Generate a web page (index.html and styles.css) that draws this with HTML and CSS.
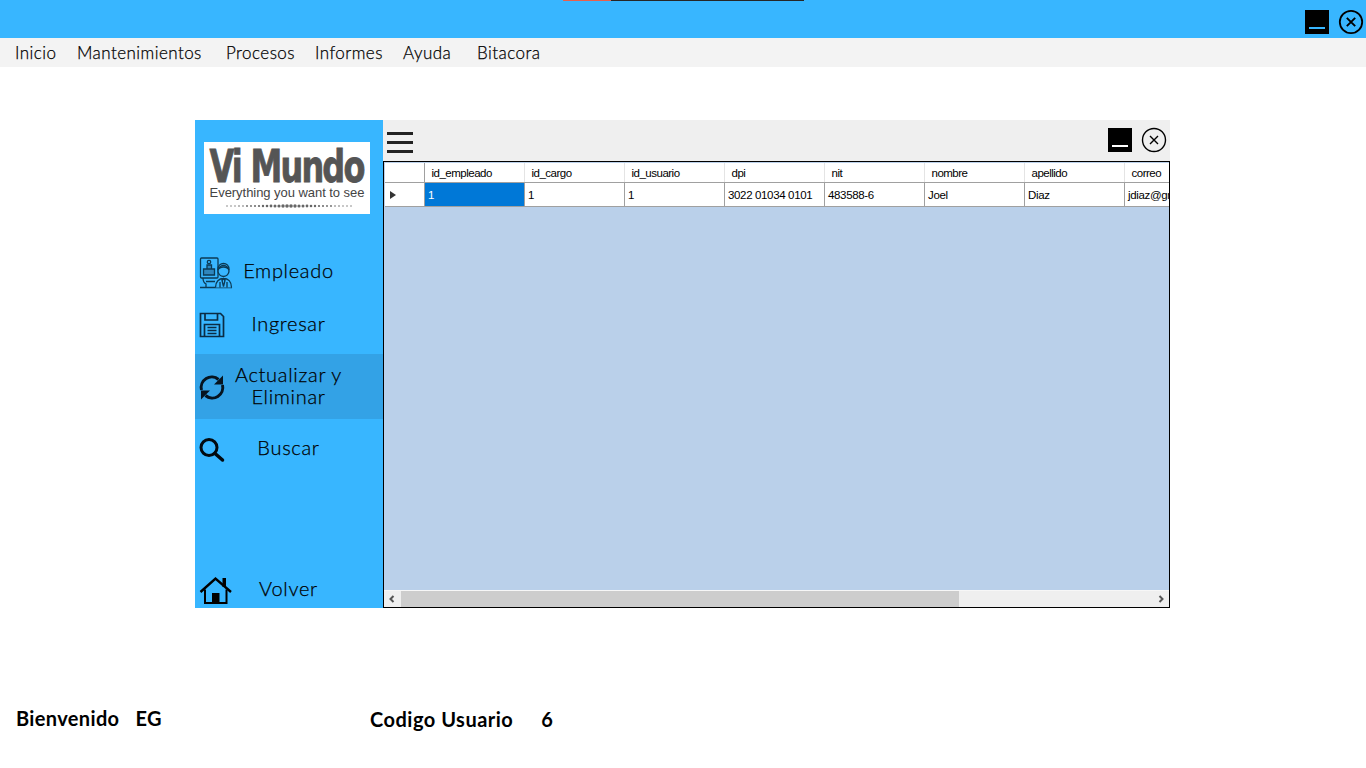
FILE: index.html
```html
<!DOCTYPE html>
<html lang="es">
<head>
  <meta charset="UTF-8">
  <meta name="viewport" content="width=device-width, initial-scale=1.0">
  <link rel="stylesheet" href="styles.css">
  <title>Vi Mundo</title>
</head>
<body>
  <div class="app">
    <header class="titlebar">
      <div class="taskmark"><span class="taskmark-red"></span><span class="taskmark-dark"></span></div>
      <div class="winbtns">
        <span class="btn-min"></span>
        <svg class="btn-close" width="26" height="26" viewBox="0 0 26 26"><circle cx="13" cy="13" r="11.2" fill="none" stroke="#000" stroke-width="1.8"/><path d="M8.800 8.800l8.400 8.400M17.200 8.800l-8.400 8.400" stroke="#000" stroke-width="1.900"/></svg>
      </div>
    </header>

    <nav class="menubar">
      <a>Inicio</a>
      <a>Mantenimientos</a>
      <a>Procesos</a>
      <a>Informes</a>
      <a>Ayuda</a>
      <a>Bitacora</a>
    </nav>

    <main class="panel">
      <aside class="sidebar">
        <div class="logo">
          <div class="logo-title">Vi Mundo</div>
          <div class="logo-sub">Everything you want to see</div>
          <svg class="logo-dots" width="130" height="4" viewBox="0 0 130 4" fill="#666">
            <circle cx="2" cy="2" r=".7"/><circle cx="6" cy="2" r=".7"/><circle cx="10" cy="2" r=".7"/><circle cx="14" cy="2" r=".8"/><circle cx="18" cy="2" r=".8"/><circle cx="22" cy="2" r=".9"/><circle cx="26" cy="2" r=".9"/><circle cx="30" cy="2" r="1"/><circle cx="34" cy="2" r="1.100"/><circle cx="38" cy="2" r="1.200"/><circle cx="42" cy="2" r="1.300"/><circle cx="46" cy="2" r="1.400"/><circle cx="50" cy="2" r="1.500"/><circle cx="54" cy="2" r="1.600"/><circle cx="58" cy="2" r="1.700"/><circle cx="62" cy="2" r="1.800"/><circle cx="66" cy="2" r="1.800"/><circle cx="70" cy="2" r="1.700"/><circle cx="74" cy="2" r="1.600"/><circle cx="78" cy="2" r="1.500"/><circle cx="82" cy="2" r="1.400"/><circle cx="86" cy="2" r="1.300"/><circle cx="90" cy="2" r="1.200"/><circle cx="94" cy="2" r="1.100"/><circle cx="98" cy="2" r="1"/><circle cx="102" cy="2" r=".9"/><circle cx="106" cy="2" r=".9"/><circle cx="110" cy="2" r=".8"/><circle cx="114" cy="2" r=".8"/><circle cx="118" cy="2" r=".7"/><circle cx="122" cy="2" r=".7"/><circle cx="126" cy="2" r=".7"/>
          </svg>
        </div>

        <ul class="sidemenu">
          <li class="item item-empleado">
            <svg width="34" height="34" viewBox="0 0 34 34" fill="none" stroke="#0b3a55" stroke-width="1.300">
              <rect x="1.500" y="3" width="17.500" height="20" rx="1"/>
              <circle cx="10" cy="7" r="1.700"/>
              <path d="M8 14v-4h4.500v4M4.500 14h11v6h-11z" fill="#2f86bd"/>
              <path d="M4 23c0 3 1 5 3 6v3M7 26.500h9M1 32.500h32"/>
              <circle cx="24.500" cy="16" r="5.500" fill="#38b6ff"/>
              <path d="M19 15c-.5-5 3-6.500 5.500-6.500s6 1.500 5.500 6.500c-1-2.500-3-3-5.500-3s-4.500.5-5.500 3z"/>
              <path d="M16.500 32.500c0-6 3.500-9 8-9s8 3 8 9M24.500 23.500l-1.500 2 1.500 6 1.500-6z" fill="#38b6ff"/>
              <path d="M21 27v5.500M28 27v5.500"/>
            </svg>
            <span>Empleado</span>
          </li>
          <li class="item item-ingresar">
            <svg width="34" height="34" viewBox="0 0 34 34" fill="none" stroke="#0b2c44" stroke-width="1.700">
              <path d="M1.500 6.500h20l3 3v20H1.500z"/>
              <path d="M6 6.500v6.500h12.500V6.500M5.500 29.500V17.500h15v12M8.500 20.500h9M8.500 23.500h9M8.500 26.500h9"/>
            </svg>
            <span>Ingresar</span>
          </li>
          <li class="item item-actualizar">
            <svg width="34" height="34" viewBox="0 0 34 34" fill="none" stroke="#06141f" stroke-width="3">
              <path d="M2.500 20a10.500 10.500 0 0 1 17-10.500"/>
              <path d="M23.500 15a10.500 10.500 0 0 1-17 10.500"/>
              <path d="M24 5.500v9h-9z" fill="#06141f" stroke="none"/>
              <path d="M2 29.500v-9h9z" fill="#06141f" stroke="none"/>
            </svg>
            <span>Actualizar y<br>Eliminar</span>
          </li>
          <li class="item item-buscar">
            <svg width="34" height="34" viewBox="0 0 34 34" fill="none" stroke="#020a10" stroke-width="3">
              <circle cx="10" cy="16.500" r="8"/>
              <path d="M16 22.500l7.500 6.500" stroke-linecap="round" stroke-width="3.500"/>
            </svg>
            <span>Buscar</span>
          </li>
          <li class="item item-volver">
            <svg width="34" height="34" viewBox="0 0 34 34">
              <path d="M1.500 20L16.500 6.500 32 20" fill="none" stroke="#000" stroke-width="2.400"/>
              <path d="M23.500 6h3.500v9h-3.500z" fill="#000"/>
              <path d="M6 17.500v13.500h21.500V17.500" fill="none" stroke="#000" stroke-width="2"/>
              <path d="M13 21h7.500v10H13z" fill="#000"/>
            </svg>
            <span>Volver</span>
          </li>
        </ul>
      </aside>

      <section class="content">
        <div class="toolbar">
          <div class="hamburger"><i></i><i></i><i></i></div>
          <div class="winbtns winbtns-inner">
            <span class="btn-min btn-min-white"></span>
            <svg class="btn-close" width="26" height="26" viewBox="0 0 26 26"><circle cx="13" cy="13" r="11.500" fill="none" stroke="#000" stroke-width="1.400"/><path d="M9 9l8 8M17 9l-8 8" stroke="#000" stroke-width="1.400"/></svg>
          </div>
        </div>

        <div class="grid">
          <div class="grid-scroll">
            <table class="datagrid">
              <thead>
                <tr>
                  <th class="rowhead"></th>
                  <th>id_empleado</th>
                  <th>id_cargo</th>
                  <th>id_usuario</th>
                  <th>dpi</th>
                  <th>nit</th>
                  <th>nombre</th>
                  <th>apellido</th>
                  <th>correo</th>
                </tr>
              </thead>
              <tbody>
                <tr>
                  <td class="rowhead"><span class="rowarrow"></span></td>
                  <td class="selected">1</td>
                  <td>1</td>
                  <td>1</td>
                  <td>3022 01034 0101</td>
                  <td>483588-6</td>
                  <td>Joel</td>
                  <td>Diaz</td>
                  <td>jdiaz@gmail.com</td>
                </tr>
              </tbody>
            </table>
          </div>
          <div class="hscroll">
            <svg class="hscroll-arrow" width="8" height="8" viewBox="0 0 8 8"><path d="M5.500 1L2.500 4l3 3" fill="none" stroke="#555" stroke-width="2"/></svg>
            <div class="hscroll-track"><div class="hscroll-thumb"></div></div>
            <svg class="hscroll-arrow" width="8" height="8" viewBox="0 0 8 8"><path d="M2.500 1l3 3-3 3" fill="none" stroke="#555" stroke-width="2"/></svg>
          </div>
        </div>
      </section>
    </main>

    <footer class="status">
      <div class="status-user"><span>Bienvenido</span><span>EG</span></div>
      <div class="status-code"><span>Codigo Usuario</span><span>6</span></div>
    </footer>
  </div>
</body>
</html>
```

FILE: styles.css
```css
*{
  box-sizing:border-box;
}
html,body{
  margin:0; padding:0; background:#fff;
}
.app{
  width:1366px; height:768px; overflow:hidden; position:relative;
  font-family:"Lato","Open Sans",sans-serif; color:#000;
}

/* top bar */
.titlebar{
  height:38px; background:#38b6ff;
  display:flex; justify-content:flex-end;
  padding:10px 2px 0 0;
}
.taskmark{
  position:absolute; top:0; left:563px; height:1px; display:flex;
}
.taskmark-red{
  width:48px; background:#e8604c;
}
.taskmark-dark{
  width:193px; background:#262626;
}
.winbtns{
  display:flex; align-items:flex-start; gap:9px;
}
.btn-min{
  width:24px; height:24px; background:#000; display:block; position:relative;
}
.btn-min::after{
  content:""; position:absolute; left:4px; right:4px; bottom:5px; height:2px; background:#38b6ff;
}
.btn-min-white::after{
  background:#fff;
}
.btn-close{
  display:block; margin-top:-1px;
}

.menubar{
  height:29px; background:#f3f3f3;
  display:grid; grid-template-columns:62px 149px 89px 88px 74px auto; align-items:center;
  padding-left:15px; font-size:17px; font-weight:300;
  letter-spacing:.45px; -webkit-text-stroke:.25px #000;
}

/* panel */
.panel{
  width:975px; height:488px; margin:53px 0 0 195px;
  display:flex;
}
.sidebar{
  width:188px; background:#38b6ff;
  display:flex; flex-direction:column;
  padding-top:22px;
}
.logo{
  width:166px; height:72px; margin-left:9px; background:#fff; color:#555;
  display:flex; flex-direction:column; align-items:center;
  flex:none;
}
.logo-title{
  font-family:"DejaVu Sans","Liberation Sans",sans-serif; font-weight:bold;
  font-size:45px; line-height:36px; height:36px; white-space:nowrap;
  letter-spacing:-2.500px; -webkit-text-stroke:.9px #555;
  margin-top:7px; transform:scaleX(.71);
}
.logo-sub{
  font-family:"Liberation Sans",sans-serif; font-size:13px; line-height:13px;
  white-space:nowrap; letter-spacing:-.05px; color:#444; margin-top:1px;
}
.logo-dots{
  display:block; margin:5px 0 0 6px;
}

.sidemenu{
  list-style:none; margin:31px 0 0; padding:0;
  flex:1; display:flex; flex-direction:column;
}
.item{
  display:grid; grid-template-columns:34px 1fr; align-items:center;
  padding-left:4px; font-size:20px; font-weight:300; letter-spacing:.7px;
  -webkit-text-stroke:.25px #000;
}
.item svg{
  display:block;
}
.item span{
  text-align:center; padding-right:39px; padding-bottom:3px; line-height:22px;
}
.item-empleado{
  height:53px;
}
.item-ingresar{
  height:52px; margin-bottom:4px;
}
.item-actualizar{
  height:65px; background:#33a2e6;
}
.item-buscar{
  height:58px;
}
.item-volver{
  height:38px; margin-top:auto;
}

/* right side */
.content{
  flex:1; display:flex; flex-direction:column; min-width:0;
  background:#efefef;
}
.toolbar{
  height:41px; display:flex; justify-content:space-between; align-items:flex-start;
  padding:8px 3px 0 4px;
}
.hamburger{
  width:26px; padding-top:4px;
}
.hamburger i{
  display:block; height:2.500px; background:#222; margin-bottom:6.500px;
}
.grid{
  flex:1; border:1px solid #000; background:#bad0ea;
  display:flex; flex-direction:column; min-height:0;
}
.grid-scroll{
  flex:1; overflow:hidden; padding-left:1px; padding-top:1px;
}
.datagrid{
  border-collapse:collapse; table-layout:fixed; width:839px;
  font-family:"Liberation Sans",sans-serif; font-size:11.500px; letter-spacing:-.35px;
  background:#fff;
}
.datagrid th{
  width:100px; height:19px; font-weight:normal; text-align:left;
  padding:1px 0 0 7px; letter-spacing:-.5px;
  border-right:1px solid #e4e4e4; border-bottom:1px solid #a0a0a0;
}
.datagrid td{
  width:100px; height:24px; padding:1px 0 0 3.500px; white-space:nowrap; overflow:hidden;
  border-right:1px solid #a0a0a0; border-bottom:1px solid #a0a0a0;
}
.datagrid .rowhead{
  width:39px; padding:1px 0 0 0; border-right:1px solid #a0a0a0;
}
.datagrid .selected{
  background:#0078d7; color:#fff;
}
.rowarrow{
  display:block; width:0; height:0; margin-left:5px;
  border-left:6px solid #333; border-top:4.500px solid transparent; border-bottom:4.500px solid transparent;
}
.hscroll{
  height:17px; background:#efefef; border-top:1px solid #f7f7f7;
  display:flex; align-items:center; padding:0 4px;
}
.hscroll-arrow{
  display:block; flex:none;
}
.hscroll-track{
  flex:1; height:16px; padding:0 5px;
}
.hscroll-thumb{
  width:558px; height:16px; background:#cdcdcd;
}

/* bottom labels */
.status{
  display:flex; font-size:20px; font-weight:bold; letter-spacing:.35px; margin-top:98px;
}
.status-user{
  width:370px; padding-left:16px; display:flex; gap:16px;
}
.status-code{
  display:flex; gap:28px; padding-top:1px; letter-spacing:.5px;
}
```
